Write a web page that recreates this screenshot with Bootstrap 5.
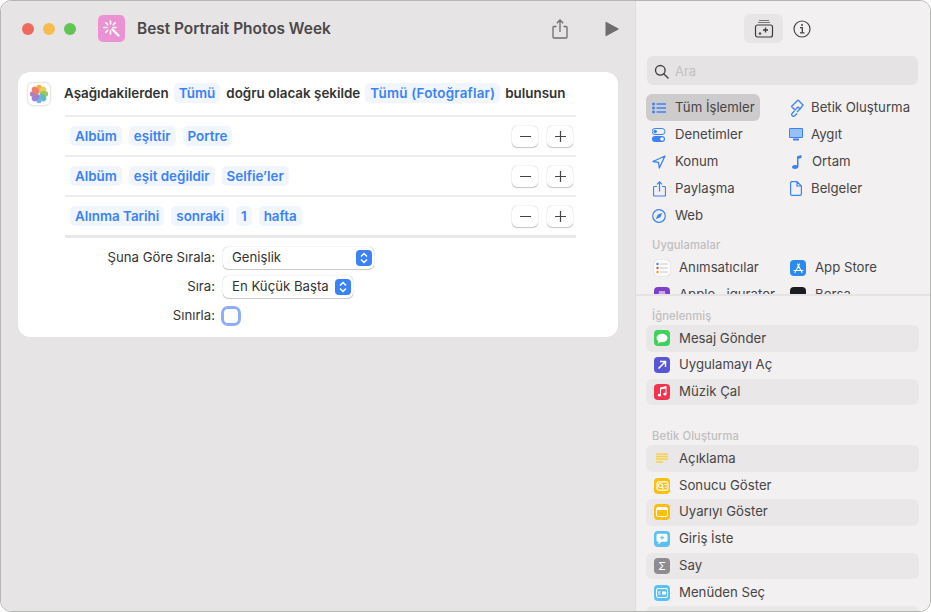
<!DOCTYPE html>
<html lang="tr"><head><meta charset="utf-8"><title>Best Portrait Photos Week</title>
<link href="https://cdn.jsdelivr.net/npm/bootstrap@5.3.0/dist/css/bootstrap.min.css" rel="stylesheet">
<style>
html,body{margin:0;width:931px;height:612px;overflow:hidden;background:#fff}
body{font-family:Inter,"Liberation Sans",sans-serif;font-size:13px;color:#3b393a}
.win{width:931px;height:612px;border:1px solid #b5b5b3;border-radius:11px;overflow:hidden;display:flex}
.lft{width:634px;flex:none;background:#e6e4e5;padding:0 17px 0 17px}
.rgt{flex:1;background:#f2f0f1;border-left:1px solid #dedcdd;display:flex;flex-direction:column;min-width:0}
.tbar{height:71px;padding:0 0 16px 4px;align-items:center;display:flex}
.dot{width:12px;height:12px;border-radius:50%;margin-right:9px}
.apic{width:27px;height:27px;border-radius:5px;background:#ea92d2;margin-left:13px;margin-right:12px}
.ttl{font-size:15.4px;font-weight:600;color:#4a4849;flex:1;white-space:nowrap}
.shr{margin-right:36px}
.ply{margin-right:-1px}
.wcard{background:#fff;border-radius:12px;height:265px;padding:11px 42px 0 10px;box-shadow:0 0 1px rgba(0,0,0,.06)}
.fl{font-size:13.4px;font-weight:600;color:#333}
.tok{display:inline-block;padding:0 5px;height:20px;line-height:20px;background:#f1f6fe;color:#3b82f6;border-radius:5px;font-weight:600;font-size:13.4px;white-space:nowrap}
.tokw{letter-spacing:.2px}
.hrow{height:22px;gap:5px;margin-bottom:10px;white-space:nowrap}
.hrow .fl,.hrow .tok{margin-bottom:2px}
.hrow .flw{margin-right:9px;flex:none;filter:drop-shadow(0 0 1px rgba(0,0,0,.3))}
.hrow .fl2{margin-left:1px}
.crow{height:40px;margin-left:37px;border-top:2px solid #eeeded;gap:7px;padding-left:5px;padding-right:3px;align-items:center;display:flex}
.sbtn{width:26px;height:21px;padding:0;border:0;border-radius:5px;background:#fff;box-shadow:0 0 1px rgba(0,0,0,.35),0 1px 1px rgba(0,0,0,.2);display:flex;align-items:center;justify-content:center;flex:none}
.sbtn+.sbtn{margin-left:2px}
.form-r{margin-left:37px;border-top:3px solid #e9e8e8;padding-top:5px}
.frow{height:29px;display:flex;align-items:center}
.flab{width:150px;text-align:right;padding-right:0;font-size:13.2px;color:#333;white-space:nowrap}
.sel{margin-left:8px;height:22px;border-radius:5px;background:#fff;box-shadow:0 0 1px rgba(0,0,0,.4),0 1px 1px rgba(0,0,0,.18);display:flex;align-items:center;justify-content:space-between;padding:0 2px 0 9px;font-size:13.2px;color:#333}
.sar{width:16px;height:16px;background:#3b82f6;border-radius:4px;display:flex;align-items:center;justify-content:center}
.chk{margin-left:9px;width:14px;height:14px;border-radius:4px;background:#fff;box-shadow:0 0 0 3px #8eaef3}
.tabs{height:55px;align-items:center;gap:10px;display:flex;flex:none;padding-left:108px}
.tabon{width:39px;height:29px;border-radius:6px;background:#e7e5e6;display:flex;align-items:center;justify-content:center}
.srch{height:29px;margin:0 12px 9px 11px;border-radius:6px;background:#e5e3e4;display:flex;align-items:center;padding:2px 7px 0;gap:6px;flex:none;color:#c3c1c2}
.upper{height:295px;overflow:hidden;flex:none;border-bottom:2px solid #e5e3e4}
.cats{display:grid;grid-template-columns:135px 1fr;margin:0 10px;grid-auto-rows:27px}
.cat{display:flex;align-items:center;height:27px;font-size:13.2px;padding-left:6px;gap:9px;border-radius:6px;color:#464445;white-space:nowrap}
.cat.on{background:#cdcbcc;width:114px}
.cat svg{flex:none}
.hd{font-size:11.2px;color:#c0bebf;font-weight:500;padding-left:16px;height:16px;line-height:16px;letter-spacing:.01em}
.apps{display:grid;grid-template-columns:136px 1fr;margin:2px 0 0 18px;grid-auto-rows:26.5px}
.apit{display:flex;align-items:center;gap:9px;font-size:13.2px;color:#464445;white-space:nowrap}
.ico{width:16px;height:16px;border-radius:4px;flex:none;display:flex;align-items:center;justify-content:center}
.lst{margin:1px 11px 0 10px}
.lit{height:26.8px;display:flex;align-items:center;gap:9px;padding-left:8px;border-radius:6px;font-size:13.2px;color:#464445}
.lit:nth-child(odd){background:#e9e7e8}
.lower{flex:1;overflow:hidden;padding-top:12px}
.hd2{margin-top:23px}
</style></head><body>
<div class="win">
<div class="lft">
 <div class="tbar">
  <span class="dot" style="background:#ee6a5f"></span><span class="dot" style="background:#f5bd4f"></span><span class="dot" style="background:#61c454"></span>
  <span class="apic d-flex align-items-center justify-content-center"><svg width="19" height="19" viewBox="0 0 19 19" stroke="#fff" stroke-width="1.600" stroke-linecap="round" fill="none"><path d="M8.500 2v3M8.500 12v3M2 8.500h3M3.800 3.800l2 2M13.200 3.800l-2 2M3.800 13.200l2-2M11 8.500h3"/><path d="M10.500 10.500l6 6" stroke-width="2.400"/></svg></span>
  <span class="ttl">Best Portrait Photos Week</span>
  <svg class="shr" width="18" height="22" viewBox="0 0 18 22" fill="none" stroke="#6f6d6e" stroke-width="1.300"><path d="M5.500 8.500H3a1 1 0 0 0-1 1V19a1 1 0 0 0 1 1h12a1 1 0 0 0 1-1V9.500a1 1 0 0 0-1-1h-2.500"/><path d="M9 14V2.500M5.800 5.300 9 2l3.200 3.300"/></svg>
  <svg class="ply" width="14" height="16" viewBox="0 0 14 16"><path d="M0.500 1.500v13a.6.6 0 0 0 .9.500l12-6.500a.6.6 0 0 0 0-1L1.400 1a.6.6 0 0 0-.9.500z" fill="#6f6d6e"/></svg>
 </div>
 <div class="wcard">
  <div class="d-flex align-items-center hrow">
   <svg class="flw" width="22" height="22" viewBox="0 0 22 22"><rect width="22" height="22" rx="5" fill="#fff"/><g opacity=".9"><ellipse cx="11" cy="6" rx="3" ry="4.200" fill="#f5a623"/><ellipse cx="11" cy="6" rx="3" ry="4.200" fill="#e9c64a" transform="rotate(45 11 11)"/><ellipse cx="11" cy="6" rx="3" ry="4.200" fill="#8bc34a" transform="rotate(90 11 11)"/><ellipse cx="11" cy="6" rx="3" ry="4.200" fill="#4db6ac" transform="rotate(135 11 11)"/><ellipse cx="11" cy="6" rx="3" ry="4.200" fill="#64a8e8" transform="rotate(180 11 11)"/><ellipse cx="11" cy="6" rx="3" ry="4.200" fill="#9575cd" transform="rotate(225 11 11)"/><ellipse cx="11" cy="6" rx="3" ry="4.200" fill="#a673b5" transform="rotate(270 11 11)"/><ellipse cx="11" cy="6" rx="3" ry="4.200" fill="#ef6f5f" transform="rotate(315 11 11)"/></g></svg>
   <span class="fl">Aşağıdakilerden</span><span class="tok">Tümü</span><span class="fl fl2">doğru olacak şekilde</span><span class="tok tokw">Tümü (Fotoğraflar)</span><span class="fl">bulunsun</span>
  </div>
  <div class="crow"><span class="tok">Albüm</span><span class="tok">eşittir</span><span class="tok">Portre</span><span class="flex-grow-1"></span><button class="sbtn btn"><svg width="11" height="11" viewBox="0 0 11 11"><path d="M0 5.500h11" stroke="#444" stroke-width="1.200"/></svg></button><button class="sbtn btn"><svg width="11" height="11" viewBox="0 0 11 11"><path d="M0 5.500h11M5.500 0v11" stroke="#444" stroke-width="1.200"/></svg></button></div>
  <div class="crow"><span class="tok">Albüm</span><span class="tok">eşit değildir</span><span class="tok">Selfie’ler</span><span class="flex-grow-1"></span><button class="sbtn btn"><svg width="11" height="11" viewBox="0 0 11 11"><path d="M0 5.500h11" stroke="#444" stroke-width="1.200"/></svg></button><button class="sbtn btn"><svg width="11" height="11" viewBox="0 0 11 11"><path d="M0 5.500h11M5.500 0v11" stroke="#444" stroke-width="1.200"/></svg></button></div>
  <div class="crow"><span class="tok">Alınma Tarihi</span><span class="tok">sonraki</span><span class="tok">1</span><span class="tok">hafta</span><span class="flex-grow-1"></span><button class="sbtn btn"><svg width="11" height="11" viewBox="0 0 11 11"><path d="M0 5.500h11" stroke="#444" stroke-width="1.200"/></svg></button><button class="sbtn btn"><svg width="11" height="11" viewBox="0 0 11 11"><path d="M0 5.500h11M5.500 0v11" stroke="#444" stroke-width="1.200"/></svg></button></div>
  <div class="form-r">
   <div class="frow"><span class="flab">Şuna Göre Sırala:</span><span class="sel" style="width:151px">Genişlik<span class="sar"><svg width="8" height="12" viewBox="0 0 8 12" fill="none" stroke="#fff" stroke-width="1.500"><path d="M1 4.500 4 1.500l3 3M1 7.500l3 3 3-3"/></svg></span></span></div>
   <div class="frow"><span class="flab">Sıra:</span><span class="sel" style="width:130px">En Küçük Başta<span class="sar"><svg width="8" height="12" viewBox="0 0 8 12" fill="none" stroke="#fff" stroke-width="1.500"><path d="M1 4.500 4 1.500l3 3M1 7.500l3 3 3-3"/></svg></span></span></div>
   <div class="frow"><span class="flab">Sınırla:</span><span class="chk"></span></div>
  </div>
 </div>
</div>
<div class="rgt">
 <div class="upper">
  <div class="tabs">
   <span class="tabon"><svg width="20" height="20" viewBox="0 0 20 20" fill="none" stroke="#3c3a3b" stroke-width="1.200"><rect x="1.500" y="6" width="17" height="12" rx="2"/><path d="M4 3.500h12M5 1.500h10" stroke="#777"/><path d="M11.500 8.500v5M9 11h5" stroke-width="1.300"/><path d="M6 13v3M4.700 14.700h2.600" stroke-width="1"/></svg></span>
   <svg width="18" height="18" viewBox="0 0 18 18" fill="none" stroke="#444" stroke-width="1.200"><circle cx="9" cy="9" r="8"/><path d="M7 7.700h2.300v5M7 12.800h4.500" stroke-width="1.300"/><circle cx="9" cy="5" r="1" fill="#444" stroke="none"/></svg>
  </div>
  <div class="srch"><svg width="15" height="15" viewBox="0 0 15 15" fill="none" stroke="#444" stroke-width="1.400"><circle cx="6.300" cy="6.300" r="4.800"/><path d="m10 10 4 4" stroke-linecap="round"/></svg><span>Ara</span></div>
  <div class="cats">
   <div class="cat on"><svg width="14" height="12" viewBox="0 0 14 12" stroke="#3b82f6" stroke-width="1.300" fill="#3b82f6"><circle cx="1.500" cy="2" r=".8"/><circle cx="1.500" cy="6" r=".8"/><circle cx="1.500" cy="10" r=".8"/><path d="M4.500 2H14M4.500 6H14M4.500 10H14"/></svg>Tüm İşlemler</div>
   <div class="cat" style="padding-left:9px;gap:7px"><svg width="14" height="18" viewBox="0 0 14 18" fill="none" stroke="#3b82f6" stroke-width="1.300" stroke-linejoin="round"><path d="M8 1 1.500 7.500 5 11l3-3 2 2-3 3M8 1l5 5-3 4"/><path d="M4.500 12 2 14.500a1.800 1.800 0 0 0 2.500 2.500L7 14.500"/></svg>Betik Oluşturma</div>
   <div class="cat"><svg width="14" height="14" viewBox="0 0 14 14" fill="#3b82f6"><rect x="0" y="0.500" width="13" height="6" rx="3" fill="none" stroke="#3b82f6"/><circle cx="3.200" cy="3.500" r="1.700"/><rect x="0" y="8" width="13" height="6" rx="3"/><circle cx="10" cy="11" r="1.800" fill="#fff"/></svg>Denetimler</div>
   <div class="cat" style="padding-left:8px;gap:7px"><svg width="15" height="13" viewBox="0 0 15 13"><rect width="14" height="10" rx="1.200" fill="#3b82f6"/><rect x="1" y="1" width="12" height="8" fill="#98c0f7"/><rect x="4" y="10.500" width="6" height="2" fill="#3b82f6"/></svg>Aygıt</div>
   <div class="cat"><svg width="14" height="14" viewBox="0 0 14 14" fill="none" stroke="#3b82f6" stroke-width="1.300" stroke-linejoin="round"><path d="M13 1 1 6.500l5.500.8.800 5.700z"/></svg>Konum</div>
   <div class="cat" style="padding-left:11px;gap:10px"><svg width="10" height="14" viewBox="0 0 10 14" fill="#3b82f6"><path d="M5 1.200 9.500 0v3L6.500 3.800V11.500C6.500 13 5 14 3 14S0 13 0 12s1-2 3-2c.8 0 1.500.2 2 .4z"/></svg>Ortam</div>
   <div class="cat" style="padding-left:7px;gap:9px"><svg width="13" height="16" viewBox="0 0 13 16" fill="none" stroke="#3b82f6" stroke-width="1.200"><path d="M4 5.500H1.500a1 1 0 0 0-1 1v7.500a1 1 0 0 0 1 1h10a1 1 0 0 0 1-1V6.500a1 1 0 0 0-1-1H9"/><path d="M6.500 10.500V1M4 3.300 6.500.8 9 3.300"/></svg>Paylaşma</div>
   <div class="cat" style="padding-left:9px;gap:9px"><svg width="12" height="15" viewBox="0 0 12 15" fill="none" stroke="#3b82f6" stroke-width="1.200"><path d="M1.500.6h5.500l4.400 4.400v8a1.300 1.300 0 0 1-1.300 1.300h-8.600A1.300 1.300 0 0 1 .6 13V2A1.400 1.400 0 0 1 1.500.6zM7 .6V5h4.400"/></svg>Belgeler</div>
   <div class="cat"><svg width="14" height="14" viewBox="0 0 14 14" fill="none" stroke="#3b82f6" stroke-width="1.200"><circle cx="7" cy="7" r="6.300"/><path d="M10.300 3.700 5.700 5.700 3.700 10.300 8.300 8.300z" fill="#3b82f6" stroke="none"/></svg>Web</div>
  </div>
  <div class="hd mt-2">Uygulamalar</div>
  <div class="apps">
   <div class="apit"><span class="ico" style="background:#fbfbfb;box-shadow:0 0 1px #aaa"><svg width="12" height="12" viewBox="0 0 12 12"><circle cx="1.500" cy="2" r="1.200" fill="#3b82f6"/><circle cx="1.500" cy="6" r="1.200" fill="#ef4444"/><circle cx="1.500" cy="10" r="1.200" fill="#f59e0b"/><path d="M4 2h8M4 6h8M4 10h8" stroke="#ccc"/></svg></span>Anımsatıcılar</div>
   <div class="apit"><span class="ico" style="background:#2b8af0"><svg width="11" height="11" viewBox="0 0 11 11" stroke="#fff" stroke-width="1.100" stroke-linecap="round"><path d="M6.500 1 2 9.500M4.500 1 9 9.500M1 7.500h9"/></svg></span>App Store</div>
   <div class="apit"><span class="ico" style="background:#7d3fc8"><svg width="10" height="10" viewBox="0 0 10 10"><path d="M2 1h6l1 9H1z" fill="#c9a4ec"/></svg></span>Apple…igurator</div>
   <div class="apit"><span class="ico" style="background:#1b1c20"></span>Borsa</div>
  </div>
 </div>
 <div class="lower">
  <div class="hd">İğnelenmiş</div>
  <div class="lst">
   <div class="lit"><span class="ico" style="background:#3fd15c"><svg width="12" height="11" viewBox="0 0 12 11"><ellipse cx="6" cy="5" rx="5.500" ry="4.300" fill="#fff"/><path d="M2.500 7.500 2 10.500l3.500-2z" fill="#fff"/></svg></span>Mesaj Gönder</div>
   <div class="lit"><span class="ico" style="background:#5856d6"><svg width="10" height="10" viewBox="0 0 10 10" fill="none" stroke="#fff" stroke-width="1.500"><path d="M1.500 8.500 8.500 1.500M3 1.500h5.500V7"/></svg></span>Uygulamayı Aç</div>
   <div class="lit"><span class="ico" style="background:#f4344f"><svg width="10" height="11" viewBox="0 0 10 11" fill="#fff"><path d="M3 1.500 9.500 0v8.200a1.600 1.400 0 1 1-1-1.300V2.500L4 3.500v5.700a1.600 1.400 0 1 1-1-1.300z"/></svg></span>Müzik Çal</div>
  </div>
  <div class="hd hd2">Betik Oluşturma</div>
  <div class="lst">
   <div class="lit"><span class="ico"><svg width="12" height="11" viewBox="0 0 12 11" stroke="#f8cf45" stroke-width="1.300"><path d="M0 1h12M0 3.500h12M0 6h12M0 9h7"/></svg></span>Açıklama</div>
   <div class="lit"><span class="ico" style="background:#fbbf10"><svg width="13" height="10" viewBox="0 0 13 10" fill="none" stroke="#fff" stroke-width="1.200"><rect x="1" y=".8" width="11" height="8.400" rx="2"/><circle cx="4.500" cy="4.500" r="2"/><path d="M6 6l1.500 1.500M8.500 3.500H11M8.500 6H11"/></svg></span>Sonucu Göster</div>
   <div class="lit"><span class="ico" style="background:#fbbf10"><svg width="12" height="10" viewBox="0 0 12 10"><rect x=".5" y=".5" width="11" height="9" rx="1.500" fill="none" stroke="#fff"/><rect x="1" y="1" width="10" height="2" fill="#fff"/></svg></span>Uyarıyı Göster</div>
   <div class="lit"><span class="ico" style="background:#5ac1f5"><svg width="12" height="12" viewBox="0 0 12 12"><path d="M2 .8h8A1.500 1.500 0 0 1 11.500 2.300v5A1.500 1.500 0 0 1 10 8.800H5.500L2.500 11.500V8.800H2A1.500 1.500 0 0 1 .5 7.300v-5A1.500 1.500 0 0 1 2 .8z" fill="#fff"/><path d="M6 2.800v4M4 4.800h4" stroke="#5ac1f5" stroke-width="1.100"/></svg></span>Giriş İste</div>
   <div class="lit"><span class="ico" style="background:#8e8c90;color:#fff;font-size:11px">Σ</span>Say</div>
   <div class="lit"><span class="ico" style="background:#5ac1f5"><svg width="12" height="10" viewBox="0 0 12 10" fill="none" stroke="#fff"><rect x=".5" y=".5" width="11" height="9" rx="1.500"/><path d="M2 4h2.500M2 6h2.500" stroke-width="1"/><rect x="6" y="3.500" width="4" height="3" fill="#fff" stroke="none"/></svg></span>Menüden Seç</div>
   <div class="lit"></div>
  </div>
 </div>
</div>
</div>
</body></html>
